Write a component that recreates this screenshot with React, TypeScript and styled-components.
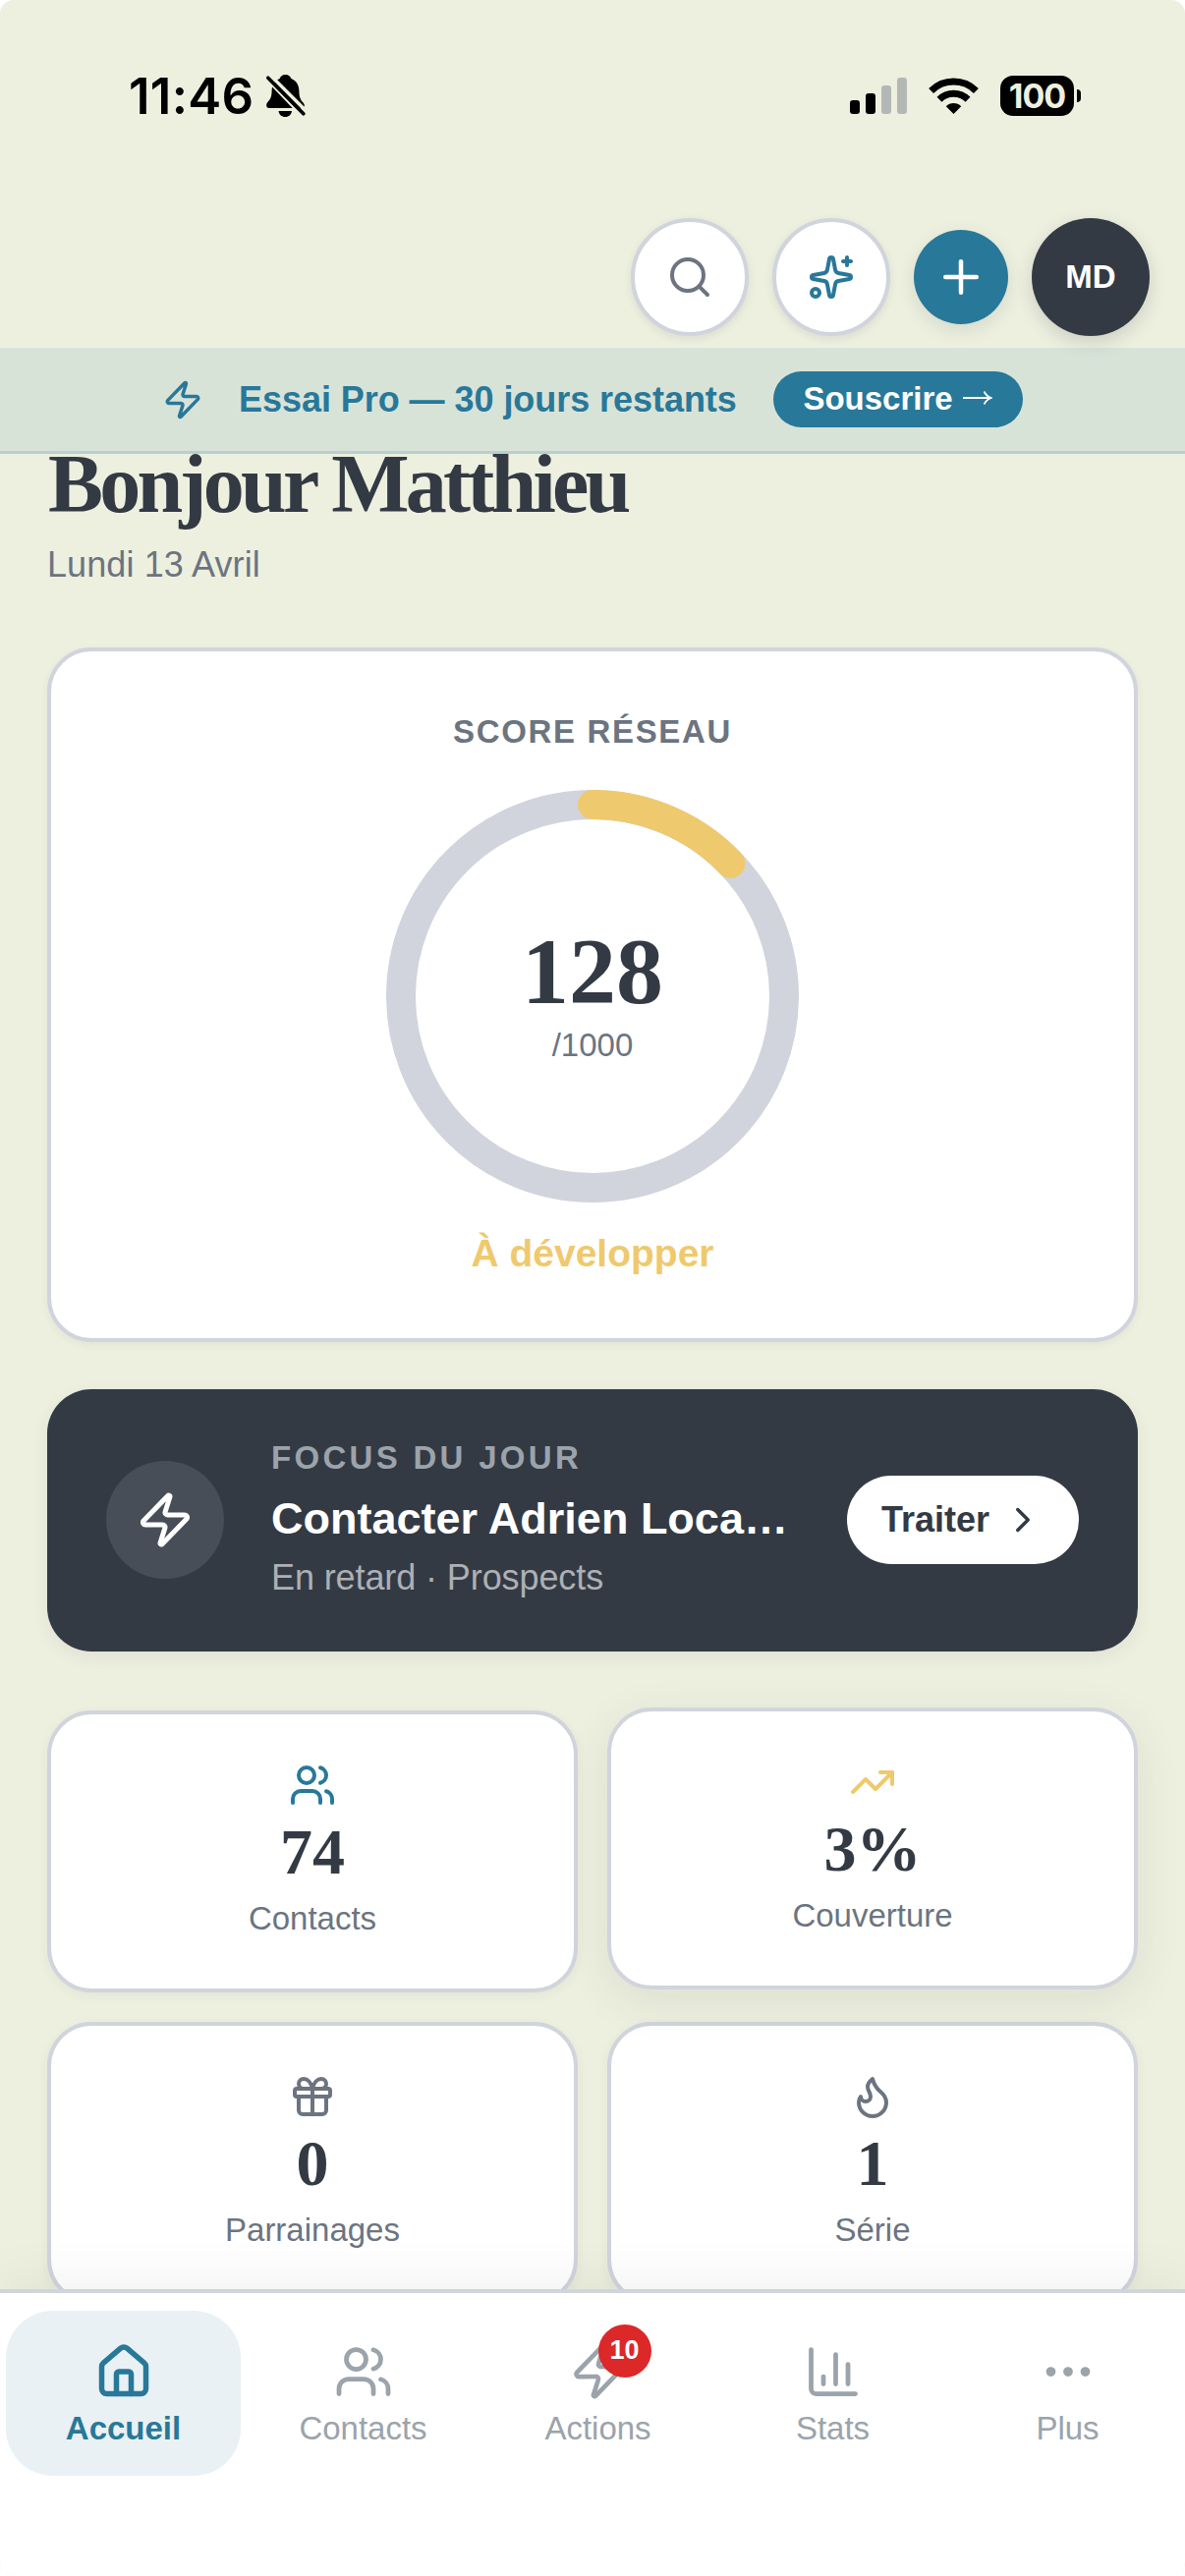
import React from 'react';
import styled, { createGlobalStyle, css } from 'styled-components';
import {
  ChartColumn,
  ChevronRight,
  Ellipsis,
  Gift,
  House,
  Plus,
  Search,
  Sparkles,
  TrendingUp,
  Users,
  Zap,
  type LucideIcon,
} from 'lucide-react';

const c = {
  page: '#edf0df',
  ink: '#333a44',
  teal: '#287899',
  gold: '#efc96d',
  muted: '#6c7480',
  faint: '#9ba3ab',
  line: '#d1d4dc',
  red: '#dc2828',
};

const sans = `"Liberation Sans", Arial, sans-serif`;
const serif = `"Liberation Serif", "Times New Roman", serif`;

const GlobalStyle = createGlobalStyle`
  * { box-sizing: border-box; }
  body { margin: 0; background: #fff; font-family: ${sans}; }
  svg { display: block; flex: none; }
`;

const Screen = styled.div`
  width: 1206px;
  height: 2622px;
  display: flex;
  flex-direction: column;
  overflow: hidden;
  border-radius: 14px;
  background: ${c.page};
  color: ${c.ink};
`;

/* ---- status bar ---- */

const StatusBar = styled.div`
  height: 195px;
  flex: none;
  display: flex;
  align-items: center;
  justify-content: space-between;
  padding: 0 106px 0 131px;
  color: #000;
`;

const StatusGroup = styled.div<{ $gap: number }>`
  display: flex;
  align-items: center;
  gap: ${(p) => p.$gap}px;
`;

const Clock = styled.span`
  font: 600 51px/60px Inter, sans-serif;
  letter-spacing: 0.3px;
`;

const Battery = styled.div`
  display: flex;
  align-items: center;
  gap: 3px;
`;

const BatteryBody = styled.div`
  width: 75px;
  height: 41px;
  border-radius: 13px;
  background: #000;
  color: ${c.page};
  display: flex;
  align-items: center;
  justify-content: center;
  font: 700 34px/41px Inter, sans-serif;
  letter-spacing: -1px;
`;

const BatteryNub = styled.div`
  width: 4px;
  height: 13px;
  border-radius: 0 5px 5px 0;
  background: #000;
`;

/* ---- header ---- */

const Header = styled.header`
  position: relative;
  z-index: 2;
  height: 159px;
  flex: none;
  display: flex;
  align-items: center;
  justify-content: flex-end;
  gap: 24px;
  padding: 15px 36px 0;
`;

const RoundButton = styled.button<{ $tone: 'light' | 'teal' | 'dark' }>`
  width: 120px;
  height: 120px;
  padding: 0;
  border: 0;
  border-radius: 50%;
  display: flex;
  align-items: center;
  justify-content: center;
  font: 700 33px/40px ${sans};
  color: #fff;
  ${(p) =>
    p.$tone === 'light' &&
    css`
      background: #fff;
      border: 4px solid ${c.line};
      box-shadow: 0 3px 9px rgba(51, 58, 68, 0.1);
    `}
  ${(p) =>
    p.$tone === 'teal' &&
    css`
      width: 96px;
      height: 96px;
      background: ${c.teal};
      box-shadow: 0 6px 18px rgba(51, 58, 68, 0.13);
    `}
  ${(p) =>
    p.$tone === 'dark' &&
    css`
      background: ${c.ink};
      box-shadow: 0 6px 18px rgba(51, 58, 68, 0.18);
    `}
`;

/* ---- trial banner ---- */

const Banner = styled.div`
  height: 108px;
  flex: none;
  display: flex;
  align-items: center;
  justify-content: center;
  gap: 36px;
  background: rgba(40, 120, 153, 0.1);
  border-bottom: 3px solid rgba(40, 120, 153, 0.18);
  color: ${c.teal};
`;

const BannerText = styled.span`
  width: 508px;
  font: 700 36px/54px ${sans};
  letter-spacing: -0.05px;
  white-space: nowrap;
`;

const SubscribeButton = styled.button`
  width: 254px;
  height: 57px;
  padding: 0 1px 2px 0;
  border: 0;
  border-radius: 29px;
  display: flex;
  align-items: center;
  justify-content: center;
  gap: 10px;
  background: ${c.teal};
  color: #fff;
  font: 700 33px/50px ${sans};
`;

/* ---- main content ---- */

const Main = styled.main`
  flex: 1;
  min-height: 0;
  display: flex;
  flex-direction: column;
  padding: 1px 48px 0;
`;

const Greeting = styled.h1`
  margin: 0;
  padding-left: 1px;
  font: 700 84px/60px ${serif};
  letter-spacing: -3.75px;
  white-space: nowrap;
`;

const DateLine = styled.p`
  margin: 25px 0 57px;
  font: 400 36px/54px ${sans};
  letter-spacing: 0.1px;
  color: ${c.muted};
`;

const cardStyle = css`
  border: 4px solid ${c.line};
  border-radius: 45px;
  background: #fff;
`;

const ScoreCard = styled.section`
  ${cardStyle}
  height: 707px;
  flex: none;
  display: flex;
  flex-direction: column;
  align-items: center;
  padding-top: 58px;
  box-shadow: 0 3px 9px rgba(51, 58, 68, 0.06);
`;

const CardTitle = styled.h2`
  margin: 0 0 35px;
  font: 700 33px/48px ${sans};
  letter-spacing: 1.65px;
  color: ${c.muted};
`;

const Gauge = styled.div`
  position: relative;
  width: 420px;
  height: 420px;
`;

const GaugeValue = styled.div`
  position: absolute;
  inset: 0;
  display: flex;
  flex-direction: column;
  align-items: center;
  justify-content: center;
  gap: 3px;
`;

const Score = styled.span`
  font: 700 96px/96px ${serif};
`;

const ScoreMax = styled.span`
  font: 400 33px/48px ${sans};
  color: ${c.muted};
`;

const Level = styled.p`
  margin: 22px 0 0;
  font: 700 39px/60px ${sans};
  color: ${c.gold};
`;

const FocusCard = styled.section`
  margin-top: 48px;
  height: 267px;
  flex: none;
  display: flex;
  align-items: center;
  gap: 48px;
  padding: 0 60px 1px;
  border-radius: 45px;
  background: ${c.ink};
  box-shadow: 0 6px 18px rgba(51, 58, 68, 0.07);
`;

const FocusIcon = styled.div`
  width: 120px;
  height: 120px;
  flex: none;
  border-radius: 50%;
  display: flex;
  align-items: center;
  justify-content: center;
  background: rgba(255, 255, 255, 0.1);
  color: #fff;
`;

const FocusBody = styled.div`
  flex: 1;
  min-width: 0;
  padding-bottom: 2px;
  white-space: nowrap;
`;

const Eyebrow = styled.div`
  font: 700 33px/48px ${sans};
  letter-spacing: 3.3px;
  color: ${c.faint};
`;

const FocusTitle = styled.div`
  margin: 8px 0 3px;
  font: 700 45px/60px ${sans};
  color: #fff;
`;

const FocusMeta = styled.div`
  font: 400 36px/54px ${sans};
  letter-spacing: -0.1px;
  color: #adb0b4;
`;

const TreatButton = styled.button`
  width: 236px;
  height: 90px;
  flex: none;
  padding: 0 36px 0 35px;
  border: 0;
  border-radius: 45px;
  display: flex;
  align-items: center;
  justify-content: space-between;
  background: #fff;
  color: ${c.ink};
  font: 700 36px/54px ${sans};
`;

const StatGrid = styled.div`
  margin-top: 60px;
  display: grid;
  grid-template-columns: 1fr 1fr;
  gap: 30px;
`;

const StatCard = styled.div<{ $raised?: boolean }>`
  ${cardStyle}
  height: 287px;
  display: flex;
  flex-direction: column;
  align-items: center;
  padding-top: 48px;
  box-shadow: 0 3px 12px rgba(51, 58, 68, 0.06);
  ${(p) =>
    p.$raised &&
    css`
      transform: translateY(-3px);
      box-shadow: 0 12px 48px rgba(51, 58, 68, 0.09);
    `}
`;

const StatValue = styled.span`
  margin: 11px 0;
  font: 700 66px/66px ${serif};
`;

const StatLabel = styled.span`
  font: 400 33px/48px ${sans};
  color: ${c.muted};
`;

/* ---- tab bar ---- */

const TabBar = styled.nav`
  position: relative;
  z-index: 3;
  height: 292px;
  flex: none;
  display: flex;
  align-items: flex-start;
  padding: 18px 0 0 6px;
  border-top: 4px solid ${c.line};
  background: #fff;
  box-shadow: 0 -12px 48px rgba(0, 0, 0, 0.05);
`;

const Tab = styled.a<{ $active?: boolean }>`
  flex: 1;
  height: 168px;
  display: flex;
  flex-direction: column;
  align-items: center;
  gap: 8px;
  padding-top: 32px;
  border-radius: 48px;
  color: ${c.faint};
  font: 400 33px/39px ${sans};
  ${(p) =>
    p.$active &&
    css`
      flex: 0 0 239px;
      margin-right: 5px;
      background: #e9f1f4;
      color: ${c.teal};
      font-weight: 700;
    `}
`;

const TabIcon = styled.span`
  position: relative;
  width: 60px;
  height: 60px;
`;

const Badge = styled.span`
  position: absolute;
  top: -18px;
  right: -24px;
  width: 54px;
  height: 54px;
  padding-bottom: 3px;
  border-radius: 50%;
  display: flex;
  align-items: center;
  justify-content: center;
  background: ${c.red};
  color: #fff;
  font: 700 27px/30px ${sans};
`;

const BellOff = () => (
  <svg width="40" height="43" viewBox="0 0 40 43">
    <path
      d="M19.5 0C22.8 0 24.6 2 25.4 4C30.6 6.2 33.2 10.5 33.4 16.5C33.6 24 35 25.600 38 29C39.500 31 39 34 36 34H3C0 34 -.6 31 1 28.600C4 25 5.400 23 5.600 16.500C5.800 10.500 8.500 6.200 13.600 4C14.400 2 16.200 0 19.500 0Z"
      fill="#000"
    />
    <path d="M12.500 37H26C25.500 40.700 23 43 19.300 43S13 40.700 12.500 37Z" fill="#000" />
    <path d="M3.500 0L41 37.500" stroke={c.page} strokeWidth="3.500" />
    <path d="M-1 3.500L36 42" stroke={c.page} strokeWidth="2.500" />
    <path d="M1.800 3.200L37.800 39.800" stroke="#000" strokeWidth="3.600" strokeLinecap="round" />
  </svg>
);

const Signal = () => (
  <svg width="58" height="37" viewBox="0 0 58 37">
    <rect x="0" y="23" width="10" height="14" rx="3" fill="#000" />
    <rect x="16" y="16" width="10" height="21" rx="3" fill="#000" />
    <rect x="32" y="8" width="10" height="29" rx="3" fill="#b3b8b6" />
    <rect x="48" y="0" width="10" height="37" rx="3" fill="#b3b8b6" />
  </svg>
);

const Wifi = () => (
  <svg width="51" height="37" viewBox="0 0 51 37">
    <path d="M2.600 13.400A32.500 32.500 0 0 1 48.400 13.400" fill="none" stroke="#000" strokeWidth="7" />
    <path d="M11 22.200A20.500 20.500 0 0 1 40 22.200" fill="none" stroke="#000" strokeWidth="7" />
    <path d="M25.500 37L17.800 29.200A11 11 0 0 1 33.200 29.200Z" fill="#000" />
  </svg>
);

const LongArrow = () => (
  <svg width="30" height="18" viewBox="0 0 30 18" fill="none" stroke="#fff" strokeWidth="1.800">
    <path d="M0 8H28.500M21.500 1.500C23 4.500 25.500 7 28.800 8C25.500 9 23 11.500 21.500 14.500" />
  </svg>
);

const Flame = ({ size, color }: { size: number; color: string }) => (
  <svg
    width={size}
    height={size}
    viewBox="0 0 24 24"
    fill="none"
    stroke={color}
    strokeWidth="2"
    strokeLinecap="round"
    strokeLinejoin="round"
  >
    <path d="M12 3q1 4 4 6.500t3 5.500a1 1 0 0 1-14 0 5 5 0 0 1 1-3 1 1 0 0 0 5 0c0-2-1.500-3-1.500-5q0-2 2.500-4" />
  </svg>
);

const RADIUS = 195;
const CIRCUMFERENCE = 2 * Math.PI * RADIUS;

const ScoreRing = ({ value, max }: { value: number; max: number }) => (
  <svg width="420" height="420" viewBox="0 0 420 420" fill="none" strokeWidth="30">
    <circle cx="210" cy="210" r={RADIUS} stroke={c.line} />
    <circle
      cx="210"
      cy="210"
      r={RADIUS}
      stroke={c.gold}
      strokeLinecap="round"
      strokeDasharray={`${(CIRCUMFERENCE * value) / max} ${CIRCUMFERENCE}`}
      transform="rotate(-90 210 210)"
    />
  </svg>
);

const stats = [
  { icon: Users, color: c.teal, value: '74', label: 'Contacts' },
  { icon: TrendingUp, color: c.gold, value: '3%', label: 'Couverture', raised: true },
  { icon: Gift, color: c.muted, value: '0', label: 'Parrainages' },
  { icon: Flame, color: c.muted, value: '1', label: 'Série' },
];

const tabs: { icon: LucideIcon; label: string; active?: boolean; badge?: number }[] = [
  { icon: House, label: 'Accueil', active: true },
  { icon: Users, label: 'Contacts' },
  { icon: Zap, label: 'Actions', badge: 10 },
  { icon: ChartColumn, label: 'Stats' },
  { icon: Ellipsis, label: 'Plus' },
];

export default function App() {
  return (
    <>
      <GlobalStyle />
      <Screen>
        <StatusBar>
          <StatusGroup $gap={13}>
            <Clock>11:46</Clock>
            <BellOff />
          </StatusGroup>
          <StatusGroup $gap={22}>
            <Signal />
            <Wifi />
            <Battery>
              <BatteryBody>100</BatteryBody>
              <BatteryNub />
            </Battery>
          </StatusGroup>
        </StatusBar>

        <Header>
          <RoundButton $tone="light">
            <Search size={48} color={c.muted} />
          </RoundButton>
          <RoundButton $tone="light">
            <Sparkles size={48} color={c.teal} />
          </RoundButton>
          <RoundButton $tone="teal">
            <Plus size={54} />
          </RoundButton>
          <RoundButton $tone="dark">MD</RoundButton>
        </Header>

        <Banner>
          <Zap size={42} />
          <BannerText>Essai Pro — 30 jours restants</BannerText>
          <SubscribeButton>
            Souscrire
            <LongArrow />
          </SubscribeButton>
        </Banner>

        <Main>
          <Greeting>Bonjour Matthieu</Greeting>
          <DateLine>Lundi 13 Avril</DateLine>

          <ScoreCard>
            <CardTitle>SCORE RÉSEAU</CardTitle>
            <Gauge>
              <ScoreRing value={128} max={1000} />
              <GaugeValue>
                <Score>128</Score>
                <ScoreMax>/1000</ScoreMax>
              </GaugeValue>
            </Gauge>
            <Level>À développer</Level>
          </ScoreCard>

          <FocusCard>
            <FocusIcon>
              <Zap size={60} />
            </FocusIcon>
            <FocusBody>
              <Eyebrow>FOCUS DU JOUR</Eyebrow>
              <FocusTitle>Contacter Adrien Loca…</FocusTitle>
              <FocusMeta>En retard · Prospects</FocusMeta>
            </FocusBody>
            <TreatButton>
              Traiter
              <ChevronRight size={42} />
            </TreatButton>
          </FocusCard>

          <StatGrid>
            {stats.map(({ icon: Icon, color, value, label, raised }) => (
              <StatCard key={label} $raised={raised}>
                <Icon size={48} color={color} />
                <StatValue>{value}</StatValue>
                <StatLabel>{label}</StatLabel>
              </StatCard>
            ))}
          </StatGrid>
        </Main>

        <TabBar>
          {tabs.map(({ icon: Icon, label, active, badge }) => (
            <Tab key={label} $active={active}>
              <TabIcon>
                <Icon size={60} strokeWidth={active ? 2.2 : 1.9} />
                {badge && <Badge>{badge}</Badge>}
              </TabIcon>
              {label}
            </Tab>
          ))}
        </TabBar>
      </Screen>
    </>
  );
}
